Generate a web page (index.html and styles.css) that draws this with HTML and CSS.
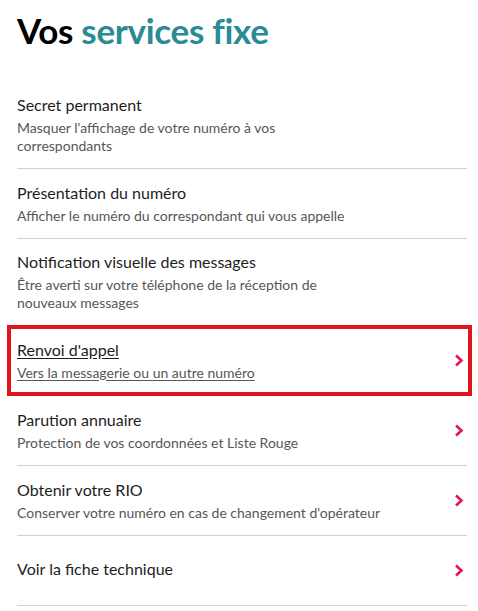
FILE: index.html
```html
<!DOCTYPE html>
<html lang="fr">
<head>
  <meta charset="UTF-8">
  <title>Vos services fixe</title>
  <link rel="stylesheet" href="styles.css">
</head>
<body>
  <div class="page">
    <h1 class="page-title">Vos <span class="accent">services fixe</span></h1>

    <ul class="service-list">
      <li class="service-item">
        <div class="service-text">
          <div class="service-name">Secret permanent</div>
          <div class="service-desc">Masquer l'affichage de votre numéro à vos<br>correspondants</div>
        </div>
      </li>
      <li class="service-item">
        <div class="service-text">
          <div class="service-name">Présentation du numéro</div>
          <div class="service-desc">Afficher le numéro du correspondant qui vous appelle</div>
        </div>
      </li>
      <li class="service-item">
        <div class="service-text">
          <div class="service-name">Notification visuelle des messages</div>
          <div class="service-desc">Être averti sur votre téléphone de la réception de<br>nouveaux messages</div>
        </div>
      </li>
      <li class="service-item link focused">
        <div class="service-text">
          <div class="service-name">Renvoi d'appel</div>
          <div class="service-desc">Vers la messagerie ou un autre numéro</div>
        </div>
        <svg class="chevron" width="10" height="13" viewBox="0 0 10 13"><path d="M2 1.5 L7.5 6.5 L2 11.5" fill="none" stroke="currentColor" stroke-width="2.6"/></svg>
      </li>
      <li class="service-item link">
        <div class="service-text">
          <div class="service-name">Parution annuaire</div>
          <div class="service-desc">Protection de vos coordonnées et Liste Rouge</div>
        </div>
        <svg class="chevron" width="10" height="13" viewBox="0 0 10 13"><path d="M2 1.5 L7.5 6.5 L2 11.5" fill="none" stroke="currentColor" stroke-width="2.6"/></svg>
      </li>
      <li class="service-item link">
        <div class="service-text">
          <div class="service-name">Obtenir votre RIO</div>
          <div class="service-desc">Conserver votre numéro en cas de changement d'opérateur</div>
        </div>
        <svg class="chevron" width="10" height="13" viewBox="0 0 10 13"><path d="M2 1.5 L7.5 6.5 L2 11.5" fill="none" stroke="currentColor" stroke-width="2.6"/></svg>
      </li>
      <li class="service-item link">
        <div class="service-text">
          <div class="service-name">Voir la fiche technique</div>
        </div>
        <svg class="chevron" width="10" height="13" viewBox="0 0 10 13"><path d="M2 1.5 L7.5 6.5 L2 11.5" fill="none" stroke="currentColor" stroke-width="2.6"/></svg>
      </li>
    </ul>
  </div>
</body>
</html>
```

FILE: styles.css
```css
* {
  box-sizing: border-box;
}
body {
  margin: 0;
  background: #fff;
  font-family: Lato, "Liberation Sans", sans-serif;
  color: #1e1e1e;
}
.page {
  padding: 0 11px 0 17px;
}
.page-title {
  margin: 0;
  padding-top: 10px;
  font-size: 35px;
  line-height: 40px;
  font-weight: 700;
  letter-spacing: -0.3px;
  color: #000;
}
.page-title .accent {
  color: #2a8b95;
}
.service-list {
  list-style: none;
  margin: 32px 0 0;
  padding: 0;
}
.service-item {
  position: relative;
  display: flex;
  align-items: center;
  justify-content: space-between;
  min-height: 70px;
  padding: 12px 0 13px;
  border-bottom: 1px solid #d0d0d0;
}
.service-item:last-child {
  padding: 12px 0;
}
.service-name {
  font-size: 16px;
  line-height: 22px;
  color: #1e1e1e;
  margin-bottom: 3px;
}
.service-desc {
  font-size: 14px;
  line-height: 18px;
  color: #575757;
}
.link .chevron {
  flex-shrink: 0;
  margin-right: 3px;
  color: #e3174d;
}
.focused .service-name,
.focused .service-desc {
  text-decoration: underline;
  text-underline-offset: 2px;
}
.focused::after {
  content: "";
  position: absolute;
  top: -1px;
  bottom: -1px;
  left: -10px;
  right: -5px;
  border: 4px solid #e4141f;
}
```
